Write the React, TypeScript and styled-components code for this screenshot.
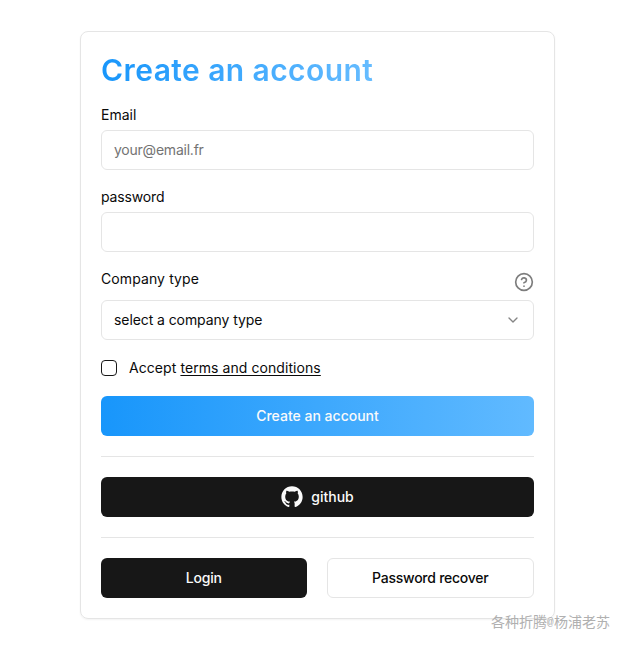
import React from "react";
import styled, { createGlobalStyle } from "styled-components";
import { ChevronDown, CircleHelp } from "lucide-react";
import { RxGithubLogo } from "react-icons/rx";

const GlobalStyle = createGlobalStyle`
  * { box-sizing: border-box; }
  body {
    margin: 0;
    background: #fff;
    color: #0a0a0a;
    font: 400 14px/20px Inter, "Noto Sans", sans-serif;
  }
  button, input { font: inherit; color: inherit; }
`;

const Page = styled.main`
  width: 631px;
  height: 649px;
  padding: 31px 0 0 80px;
  position: relative;
  overflow: hidden;
`;

const Card = styled.form`
  width: 475px;
  height: 588px;
  padding: 20px;
  border: 1px solid #e5e5e5;
  border-radius: 8px;
  box-shadow: 0 1px 2px rgba(0, 0, 0, 0.05);
  display: flex;
  flex-direction: column;
`;

const Text = styled.span<{ $spacing?: number }>`
  letter-spacing: ${(p) => p.$spacing ?? 0}px;
  white-space: nowrap;
`;

const Title = styled.h1`
  align-self: flex-start;
  margin: 0 0 17px;
  font-size: 30px;
  line-height: 36px;
  font-weight: 600;
  letter-spacing: 0.42px;
  white-space: nowrap;
  color: transparent;
  background: linear-gradient(to right, #1896fb, #66bcff);
  background-clip: text;
  -webkit-background-clip: text;
`;

const Field = styled.div<{ $gap?: number }>`
  display: flex;
  flex-direction: column;
  margin-bottom: ${(p) => p.$gap ?? 17}px;
`;

const Label = styled.label<{ $spacing?: number }>`
  height: 25px;
  line-height: 20px;
  color: #0a0a0a;
  letter-spacing: ${(p) => p.$spacing ?? 0}px;
`;

const Input = styled.input`
  height: 40px;
  width: 100%;
  padding: 0 12px 1px;
  border: 1px solid #e5e5e5;
  border-radius: 6px;
  background: #fff;
  outline: none;
  letter-spacing: -0.23px;
  &::placeholder { color: #737373; opacity: 1; }
`;

const LabelRow = styled.div`
  display: flex;
  justify-content: space-between;
  height: 31px;
  svg { margin-top: 3px; color: #7d7d7d; }
`;

const Select = styled.button`
  height: 40px;
  padding: 0 12px;
  border: 1px solid #e5e5e5;
  border-radius: 6px;
  background: #fff;
  display: flex;
  align-items: center;
  justify-content: space-between;
  svg { color: #858585; }
`;

const Terms = styled.label`
  display: flex;
  align-items: center;
  gap: 12px;
  height: 16px;
  margin-bottom: 20px;
`;

const Checkbox = styled.input`
  appearance: none;
  width: 16px;
  height: 16px;
  margin: 0;
  border: 1px solid #171717;
  border-radius: 4px;
`;

const TermsLink = styled.a`
  text-decoration: underline;
  text-underline-offset: 2px;
`;

const Button = styled.button<{ $variant: "primary" | "dark" | "outline" }>`
  flex: 1 1 0;
  height: 40px;
  display: flex;
  align-items: center;
  justify-content: center;
  gap: 8px;
  border-radius: 6px;
  font-weight: 500;
  border: ${(p) => (p.$variant === "outline" ? "1px solid #e5e5e5" : "0")};
  color: ${(p) => (p.$variant === "outline" ? "#0a0a0a" : "#fafafa")};
  background: ${(p) =>
    p.$variant === "primary"
      ? "linear-gradient(to right, #1896fb, #61baff)"
      : p.$variant === "dark" ? "#171717" : "#fff"};
`;

const Actions = styled.div`
  display: flex;
  gap: 20px;
  height: 40px;
`;

const Divider = styled.hr`
  width: 100%;
  height: 1px;
  flex-shrink: 0;
  margin: 20px 0;
  border: 0;
  background: #e5e5e5;
`;

const Watermark = styled.div`
  position: absolute;
  left: 491px;
  top: 611px;
  display: flex;
  font: 400 14px/20px "Noto Sans CJK SC", sans-serif;
  color: #b0b0b0;
  white-space: nowrap;
`;

const AtSign = styled.span`
  width: 7px;
  font: 11px/23px "Liberation Mono", monospace;
`;

export default function App() {
  return (
    <>
      <GlobalStyle />
      <Page>
        <Card>
          <Title>Create an account</Title>
          <Field>
            <Label htmlFor="email">Email</Label>
            <Input id="email" type="email" placeholder="your@email.fr" />
          </Field>
          <Field>
            <Label htmlFor="password" $spacing={-0.15}>password</Label>
            <Input id="password" type="password" />
          </Field>
          <Field $gap={20}>
            <LabelRow>
              <Label $spacing={0.1}>Company type</Label>
              <CircleHelp size={20} strokeWidth={2} />
            </LabelRow>
            <Select type="button">
              <Text $spacing={-0.08}>select a company type</Text>
              <ChevronDown size={16} />
            </Select>
          </Field>
          <Terms>
            <Checkbox type="checkbox" />
            <Text $spacing={0.07}>Accept <TermsLink>terms and conditions</TermsLink></Text>
          </Terms>
          <Actions>
            <Button type="button" $variant="primary"><Text>Create an account</Text></Button>
          </Actions>
          <Divider />
          <Actions>
            <Button type="button" $variant="dark"><RxGithubLogo size={22} /><Text>github</Text></Button>
          </Actions>
          <Divider />
          <Actions>
            <Button type="button" $variant="dark"><Text $spacing={-0.2}>Login</Text></Button>
            <Button type="button" $variant="outline"><Text $spacing={-0.25}>Password recover</Text></Button>
          </Actions>
        </Card>
        <Watermark>各种折腾<AtSign>@</AtSign>杨浦老苏</Watermark>
      </Page>
    </>
  );
}
